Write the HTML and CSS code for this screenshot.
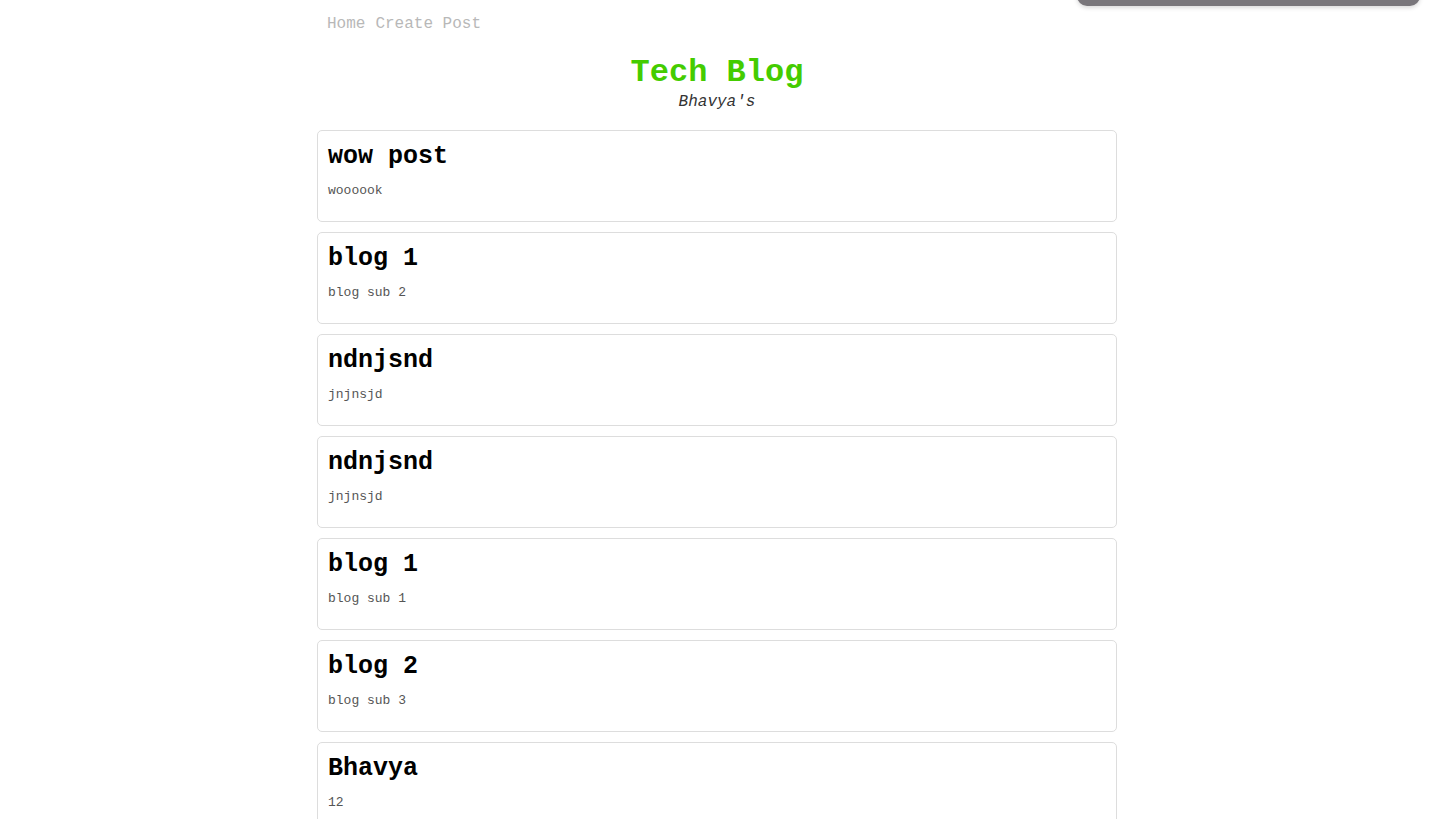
FILE: index.html
```html
<!DOCTYPE html>
<html>
<head>
<meta charset="utf-8">
<link rel="stylesheet" href="styles.css">
</head>
<body>
<div class="toast"></div>
<div class="container">
  <nav class="nav">
    <a href="#" class="nav-link">Home</a>
    <a href="#" class="nav-link">Create Post</a>
  </nav>
  <header class="header">
    <h1 class="title">Tech Blog</h1>
    <p class="subtitle">Bhavya's</p>
  </header>
  <main class="posts">
    <article class="card"><h2 class="card-title">wow post</h2><p class="card-body">woooook</p></article>
    <article class="card"><h2 class="card-title">blog 1</h2><p class="card-body">blog sub 2</p></article>
    <article class="card"><h2 class="card-title">ndnjsnd</h2><p class="card-body">jnjnsjd</p></article>
    <article class="card"><h2 class="card-title">ndnjsnd</h2><p class="card-body">jnjnsjd</p></article>
    <article class="card"><h2 class="card-title">blog 1</h2><p class="card-body">blog sub 1</p></article>
    <article class="card"><h2 class="card-title">blog 2</h2><p class="card-body">blog sub 3</p></article>
    <article class="card"><h2 class="card-title">Bhavya</h2><p class="card-body">12</p></article>
  </main>
</div>
</body>
</html>
```

FILE: styles.css
```css
html, body {
  margin: 0;
  padding: 0;
  background: #fff;
}
body {
  font-family: "Liberation Mono", "Courier New", monospace;
  color: #000;
}
.toast {
  position: fixed;
  top: -20px;
  left: 1077px;
  width: 343px;
  height: 26px;
  background: #79767b;
  border-radius: 0 0 10px 10px;
  box-shadow: 0 2px 4px rgba(0,0,0,0.15);
}
.container {
  width: 800px;
  margin-left: calc(50% - 401.5px);
}
.nav {
  display: flex;
  gap: 10px;
  padding: 15px 10px 0;
  height: 26px;
}
.nav-link {
  color: #b8b8b8;
  text-decoration: none;
  font-size: 16px;
  line-height: 18px;
}
.header {
  text-align: center;
  padding-top: 13px;
}
.title {
  margin: 0;
  font-size: 32px;
  line-height: 38px;
  font-weight: bold;
  color: #44cc00;
}
.subtitle {
  margin: 1px 0 0;
  font-size: 16px;
  line-height: 18px;
  font-style: italic;
  color: #333;
}
.posts {
  display: flex;
  flex-direction: column;
  gap: 10px;
  margin-top: 19px;
}
.card {
  border: 1px solid #ddd;
  border-radius: 5px;
  padding: 10px;
  height: 70px;
}
.card-title {
  margin: 2px 0 0;
  font-size: 25px;
  line-height: 28px;
  font-weight: bold;
}
.card-body {
  margin: 12px 0 0;
  font-size: 13px;
  line-height: 16px;
  color: #555;
}
```
